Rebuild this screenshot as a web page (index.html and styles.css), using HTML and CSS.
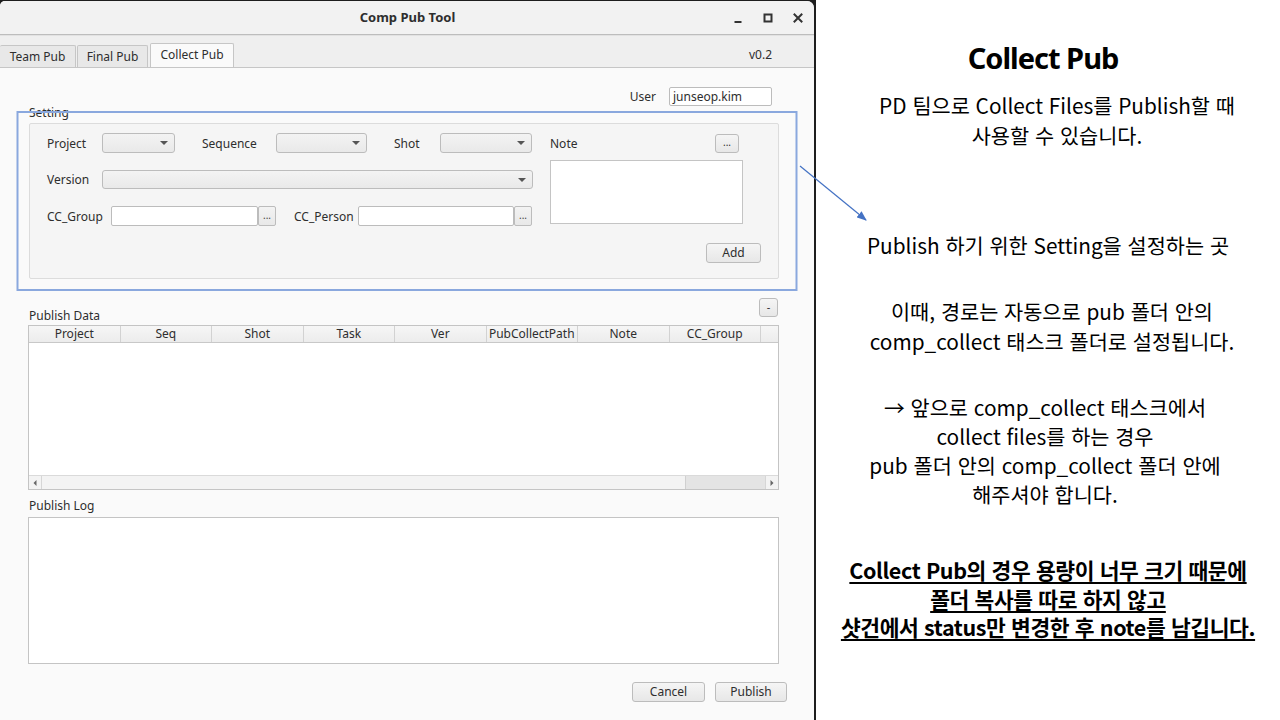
FILE: index.html
```html
<!DOCTYPE html>
<html lang="ko">
<head>
<meta charset="utf-8">
<title>Comp Pub Tool</title>
<link rel="stylesheet" href="styles.css">
</head>
<body>
<div class="screen">
  <div class="frame-bg">
  <div class="window">
    <div class="titlebar">
      <div></div>
      <div class="title">Comp Pub Tool</div>
      <div class="controls">
        <svg class="ctl" width="14" height="14" viewBox="0 0 14 14"><rect x="3.5" y="10" width="7" height="2" fill="#333"/></svg>
        <svg class="ctl" width="14" height="14" viewBox="0 0 14 14"><rect x="3.5" y="3.5" width="7" height="7" fill="none" stroke="#333" stroke-width="2"/></svg>
        <svg class="ctl" width="14" height="14" viewBox="0 0 14 14"><path d="M3.5 3.5 L10.5 10.5 M10.5 3.5 L3.5 10.5" stroke="#333" stroke-width="2" stroke-linecap="square"/></svg>
      </div>
    </div>
    <div class="tabbar">
      <div class="tabs">
        <div class="tab">Team Pub</div>
        <div class="tab">Final Pub</div>
        <div class="tab active">Collect Pub</div>
      </div>
      <div class="version">v0.2</div>
    </div>
    <div class="content">
      <div class="user-row">
        <span class="lbl">User</span>
        <div class="input user-input">junseop.kim</div>
      </div>
      <div class="group-title">Setting</div>
      <div class="group">
        <div class="group-left">
          <div class="frow">
            <span class="lbl w-project">Project</span>
            <div class="combo w73"><span class="caret"></span></div>
            <span class="lbl w-seq gap27">Sequence</span>
            <div class="combo w91"><span class="caret"></span></div>
            <span class="lbl w-shot gap27">Shot</span>
            <div class="combo w92"><span class="caret"></span></div>
          </div>
          <div class="frow">
            <span class="lbl w-project">Version</span>
            <div class="combo grow"><span class="caret"></span></div>
          </div>
          <div class="frow r3">
            <span class="lbl w-cc">CC_Group</span>
            <div class="input w147"></div>
            <div class="dots">...</div>
            <span class="lbl w-cc gap18">CC_Person</span>
            <div class="input w156"></div>
            <div class="dots">...</div>
          </div>
        </div>
        <div class="group-right">
          <div class="note-head">
            <span class="lbl">Note</span>
            <div class="btn small-dots">...</div>
          </div>
          <div class="note-box"></div>
          <div class="add-row"><div class="btn add">Add</div></div>
        </div>
      </div>
      <div class="data-head">
        <span class="section-lbl">Publish Data</span>
        <div class="btn minus">-</div>
      </div>
      <div class="table">
        <div class="thead">
          <div class="th">Project</div>
          <div class="th">Seq</div>
          <div class="th">Shot</div>
          <div class="th">Task</div>
          <div class="th">Ver</div>
          <div class="th">PubCollectPath</div>
          <div class="th">Note</div>
          <div class="th">CC_Group</div>
          <div class="th last"></div>
        </div>
        <div class="tbody"></div>
        <div class="hscroll">
          <div class="arrow-btn"><svg width="6" height="8" viewBox="0 0 6 8"><path d="M4.5 1 L1.5 4 L4.5 7 Z" fill="#666"/></svg></div>
          <div class="track"><div class="thumb"></div></div>
          <div class="arrow-btn right"><svg width="6" height="8" viewBox="0 0 6 8"><path d="M1.5 1 L4.5 4 L1.5 7 Z" fill="#666"/></svg></div>
        </div>
      </div>
      <div class="section-lbl log-lbl">Publish Log</div>
      <div class="log"></div>
      <div class="footer">
        <div class="btn foot cancel">Cancel</div>
        <div class="btn foot">Publish</div>
      </div>
    </div>
  </div>
  </div>
  <div class="slide">
    <h1 class="s-title">Collect Pub</h1>
    <p class="s-p p1">PD 팀으로 Collect Files를 Publish할 때<br>사용할 수 있습니다.</p>
    <p class="s-p p2">Publish 하기 위한 Setting을 설정하는 곳</p>
    <p class="s-p p3">이때, 경로는 자동으로 pub 폴더 안의<br>comp_collect 태스크 폴더로 설정됩니다.</p>
    <p class="s-p p4">→ 앞으로 comp_collect 태스크에서<br>collect files를 하는 경우<br>pub 폴더 안의 comp_collect 폴더 안에<br>해주셔야 합니다.</p>
    <p class="s-p p5"><u>Collect Pub의 경우 용량이 너무 크기 때문에</u><br><u>폴더 복사를 따로 하지 않고</u><br><u>샷건에서 status만 변경한 후 note를 남깁니다.</u></p>
  </div>
  <svg class="annot" width="1280" height="720" viewBox="0 0 1280 720">
    <defs>
      <marker id="ah" markerWidth="10" markerHeight="8" refX="9" refY="4" orient="auto" markerUnits="userSpaceOnUse">
        <path d="M0 0 L10 4 L0 8 Z" fill="#4472c4"/>
      </marker>
    </defs>
    <rect x="17.5" y="112" width="779" height="178" fill="none" stroke="#8aa8de" stroke-width="2"/>
    <line x1="800" y1="166" x2="866" y2="220" stroke="#4472c4" stroke-width="1.2" marker-end="url(#ah)"/>
  </svg>
</div>
</body>
</html>
```

FILE: styles.css
```css
* { box-sizing: border-box; }
html, body { margin: 0; padding: 0; }
body {
  width: 1280px;
  height: 720px;
  overflow: hidden;
  background: #ffffff;
  font-family: "Noto Sans", "Open Sans", "DejaVu Sans", sans-serif;
  font-size: 12px;
  color: #2e2e2e;
}
.screen {
  position: relative;
  display: flex;
  width: 1280px;
  height: 720px;
}
.frame-bg {
  width: 816px;
  height: 720px;
  background: #1e1e1e;
  padding: 1px 2px 0 0;
  flex: none;
}
.window {
  width: 814px;
  height: 719px;
  background: #fafafa;
  border-radius: 5px 7px 0 0;
  display: flex;
  flex-direction: column;
  overflow: hidden;
}
.titlebar {
  height: 34px;
  flex: none;
  display: grid;
  grid-template-columns: 1fr auto 1fr;
  align-items: center;
  background: #f2f2f2;
  border-bottom: 1px solid #bdbdbd;
}
.title {
  font-weight: 700;
  font-size: 13px;
  color: #2e2e2e;
  margin-left: 1px;
  margin-top: -1px;
}
.controls {
  display: flex;
  justify-content: flex-end;
  gap: 16px;
  padding-right: 9px;
}
.ctl { display: block; }
.tabbar {
  height: 33px;
  flex: none;
  display: flex;
  align-items: flex-end;
  justify-content: space-between;
  background: #efefef;
  border-bottom: 1px solid #c6c6c6;
  border-top: 1px solid #e2e2e2;
}
.tabs {
  display: flex;
  align-items: flex-end;
  gap: 1px;
}
.tab {
  height: 22px;
  display: flex;
  align-items: center;
  justify-content: center;
  white-space: nowrap;
  background: #e8e8e8;
  border: 1px solid #c6c6c6;
  border-bottom: none;
  border-radius: 2px 2px 0 0;
  font-size: 12px;
  color: #2e2e2e;
}
.tab:first-child { width: 76px; border-left: none; }
.tab:nth-child(2) { width: 71px; }
.tab.active {
  width: 84px;
  height: 24px;
  margin-left: 1px;
  background: #fafafa;
  padding-bottom: 2px;
}
.version {
  align-self: center;
  margin-right: 42px;
  padding-top: 6px;
  font-size: 12px;
}
.content {
  flex: 1;
  display: flex;
  flex-direction: column;
  padding: 19px 35px 0 28px;
}
.lbl { font-size: 12px; color: #2e2e2e; white-space: nowrap; }
.user-row {
  display: flex;
  justify-content: flex-end;
  align-items: center;
  height: 19px;
  margin-right: 7px;
}
.user-row .lbl { margin-right: 13px; }
.input {
  height: 20px;
  background: #ffffff;
  border: 1px solid #bcbcbc;
  border-radius: 2px;
  font-size: 12px;
  line-height: 18px;
  padding: 0 3px;
  color: #2e2e2e;
}
.user-input { width: 103px; height: 19px; line-height: 17px; }
.group-title {
  line-height: 14px;
  height: 14px;
  margin: 0 0 3px 1px;
  font-size: 12px;
}
.group {
  height: 156px;
  margin-left: 1px;
  background: #f5f5f5;
  border: 1px solid #dcdcdc;
  border-radius: 2px;
  display: flex;
  gap: 17px;
  padding: 9px 17px 15px 17px;
}
.group-left {
  width: 486px;
  display: flex;
  flex-direction: column;
  gap: 16px;
}
.frow {
  display: flex;
  align-items: center;
  height: 20px;
}
.frow.r3 { margin-top: 1px; }
.w-project { width: 55px; }
.w-seq { width: 74px; }
.w-shot { width: 46px; }
.w-cc { width: 64px; }
.gap27 { margin-left: 27px; }
.gap18 { margin-left: 18px; }
.combo {
  position: relative;
  height: 20px;
  background: linear-gradient(#f3f3f3, #e9e9e9);
  border: 1px solid #bcbcbc;
  border-radius: 3px;
}
.combo.w73 { width: 73px; }
.combo.w91 { width: 91px; }
.combo.w92 { width: 92px; }
.combo.grow { flex: 1; height: 19px; }
.caret {
  position: absolute;
  right: 6px;
  top: 7px;
  width: 0;
  height: 0;
  border-left: 4px solid transparent;
  border-right: 4px solid transparent;
  border-top: 4px solid #555;
}
.w147 { width: 147px; }
.w156 { width: 156px; }
.dots {
  width: 18px;
  height: 20px;
  background: linear-gradient(#f3f3f3, #e8e8e8);
  border: 1px solid #bcbcbc;
  border-radius: 2px;
  font-size: 10px;
  line-height: 16px;
  text-align: center;
  color: #444;
}
.group-right {
  flex: 1;
  display: flex;
  flex-direction: column;
}
.note-head {
  height: 19px;
  display: flex;
  align-items: center;
  justify-content: space-between;
  padding-right: 22px;
  margin-top: 1px;
}
.btn {
  background: linear-gradient(#f5f5f5, #e7e7e7);
  border: 1px solid #bcbcbc;
  border-radius: 3px;
  font-size: 12px;
  color: #2e2e2e;
  text-align: center;
}
.small-dots {
  width: 24px;
  height: 19px;
  font-size: 10px;
  line-height: 15px;
}
.note-box {
  width: 193px;
  height: 64px;
  margin-top: 7px;
  background: #ffffff;
  border: 1px solid #c4c4c4;
}
.add-row {
  display: flex;
  justify-content: flex-end;
  margin-top: 19px;
}
.add {
  width: 55px;
  height: 20px;
  line-height: 18px;
}
.data-head {
  height: 27px;
  margin-top: 19px;
  display: flex;
  justify-content: space-between;
  align-items: flex-start;
}
.section-lbl {
  font-size: 12px;
  line-height: 14px;
  margin-left: 1px;
}
.data-head .section-lbl { align-self: flex-end; margin-bottom: 2px; }
.minus {
  width: 19px;
  height: 19px;
  line-height: 16px;
  font-size: 11px;
  margin-right: 1px;
}
.table {
  height: 165px;
  background: #ffffff;
  border: 1px solid #c4c4c4;
  display: flex;
  flex-direction: column;
}
.thead {
  height: 17px;
  display: grid;
  grid-template-columns: repeat(8, 91.5px) 1fr;
  background: linear-gradient(#f6f6f6, #ececec);
  border-bottom: 1px solid #c8c8c8;
}
.th {
  font-size: 12px;
  line-height: 16px;
  text-align: center;
  border-right: 1px solid #d2d2d2;
  white-space: nowrap;
  overflow: hidden;
}
.th.last { border-right: none; }
.tbody { flex: 1; }
.hscroll {
  height: 14px;
  display: flex;
  background: #f3f3f3;
  border-top: 1px solid #dadada;
}
.arrow-btn {
  width: 13px;
  display: flex;
  align-items: center;
  justify-content: center;
  border-right: 1px solid #d6d6d6;
}
.arrow-btn.right { border-right: none; border-left: 1px solid #d6d6d6; }
.track {
  flex: 1;
  display: flex;
  justify-content: flex-end;
}
.thumb {
  width: 80px;
  background: #e4e4e4;
  border-left: 1px solid #d0d0d0;
}
.log-lbl { margin-top: 9px; margin-bottom: 4px; }
.log {
  height: 147px;
  background: #ffffff;
  border: 1px solid #c4c4c4;
}
.footer {
  display: flex;
  justify-content: flex-end;
  gap: 10px;
  margin-top: 18px;
  margin-right: -8px;
}
.foot {
  width: 72px;
  height: 20px;
  line-height: 18px;
}
.cancel { width: 73px; }

/* slide */
.slide {
  flex: 1;
  display: flex;
  flex-direction: column;
  align-items: stretch;
  padding-top: 38px;
  text-align: center;
  color: #000000;
  font-family: "Noto Sans CJK KR", "Noto Sans", sans-serif;
}
.s-title {
  margin: 0;
  font-size: 29px;
  line-height: 40px;
  font-weight: 700;
  letter-spacing: -1px;
  padding-right: 10px;
  font-family: "Noto Sans", "Noto Sans CJK KR", sans-serif;
}
.s-p {
  margin: 0;
  font-size: 20.8px;
  line-height: 29px;
  font-weight: 400;
}
.p1 { margin-top: 12px; line-height: 30px; padding-left: 18px; }
.p2 { margin-top: 81px; }
.p3 { margin-top: 36px; line-height: 30px; padding-left: 8px; }
.p4 { margin-top: 37px; padding-right: 6px; }
.p5 { margin-top: 47px; font-weight: 700; font-size: 21.5px; line-height: 28.5px; letter-spacing: -0.4px; }
.p5 u { text-decoration-thickness: 1.5px; text-underline-offset: 3px; }
.annot {
  position: absolute;
  left: 0;
  top: 0;
  pointer-events: none;
}
```
